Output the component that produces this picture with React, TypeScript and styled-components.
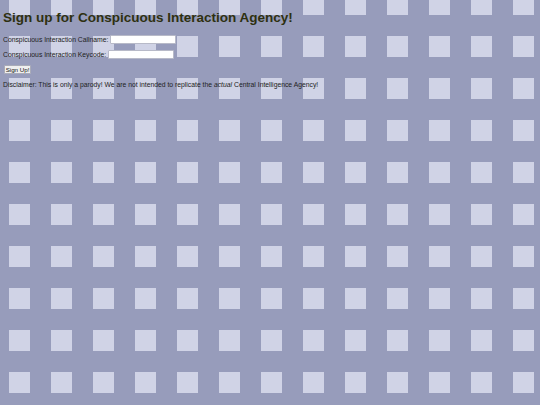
import styled, { createGlobalStyle } from "styled-components";

const GlobalStyle = createGlobalStyle`
  html, body {
    margin: 0;
    min-height: 100%;
    height: 100%;
  }
  body {
    font-family: "Liberation Sans", Arial, sans-serif;
    background-color: #979cbb;
    background-image: conic-gradient(at 21px 21px, #979cbb 0 75%, #d0d3e6 0);
    background-size: 42px 42px;
    background-position: 9px -6px;
  }
`;

const Page = styled.main`
  display: flex;
  flex-direction: column;
  align-items: flex-start;
  padding: 10px 3px 0;
  color: #222;
`;

const Title = styled.h1`
  margin: 0;
  font-size: 13.5px;
  line-height: 16px;
  font-weight: 700;
  color: #2e3010;
`;

const Form = styled.form`
  display: flex;
  flex-direction: column;
  align-items: flex-start;
  margin-top: 8px;
  gap: 5px;
`;

const Field = styled.label`
  display: flex;
  align-items: center;
  gap: 2px;
  height: 10px;
  font-size: 6.8px;
  color: #222;
`;

const TextInput = styled.input`
  box-sizing: border-box;
  width: 66px;
  height: 9px;
  margin: 0;
  padding: 0 2px;
  border: 1px solid #b8bac8;
  border-radius: 1px;
  background: #fff;
  font-size: 6px;
`;

const Submit = styled.button`
  box-sizing: border-box;
  margin: 1px 0 0 1px;
  height: 9px;
  width: 27px;
  padding: 0;
  border: 1px solid #a9abb8;
  border-radius: 1px;
  background: #efefef;
  color: #111;
  font-family: "Liberation Sans", Arial, sans-serif;
  font-size: 6.2px;
  line-height: 7px;
`;

const Disclaimer = styled.p`
  margin: 6px 0 0;
  font-size: 6.8px;
  line-height: 9px;
  color: #222;
`;

export default function App() {
  return (
    <>
      <GlobalStyle />
      <Page>
        <Title>Sign up for Conspicuous Interaction Agency!</Title>
        <Form onSubmit={(e) => e.preventDefault()}>
          <Field>
            Conspicuous Interaction Callname: <TextInput type="text" />
          </Field>
          <Field>
            Conspicuous Interaction Keycode: <TextInput type="password" />
          </Field>
          <Submit type="submit">Sign Up!</Submit>
        </Form>
        <Disclaimer>
          Disclaimer: This is only a parody! We are not intended to replicate the <em>actual</em>{" "}
          Central Intelligence Agency!
        </Disclaimer>
      </Page>
    </>
  );
}
